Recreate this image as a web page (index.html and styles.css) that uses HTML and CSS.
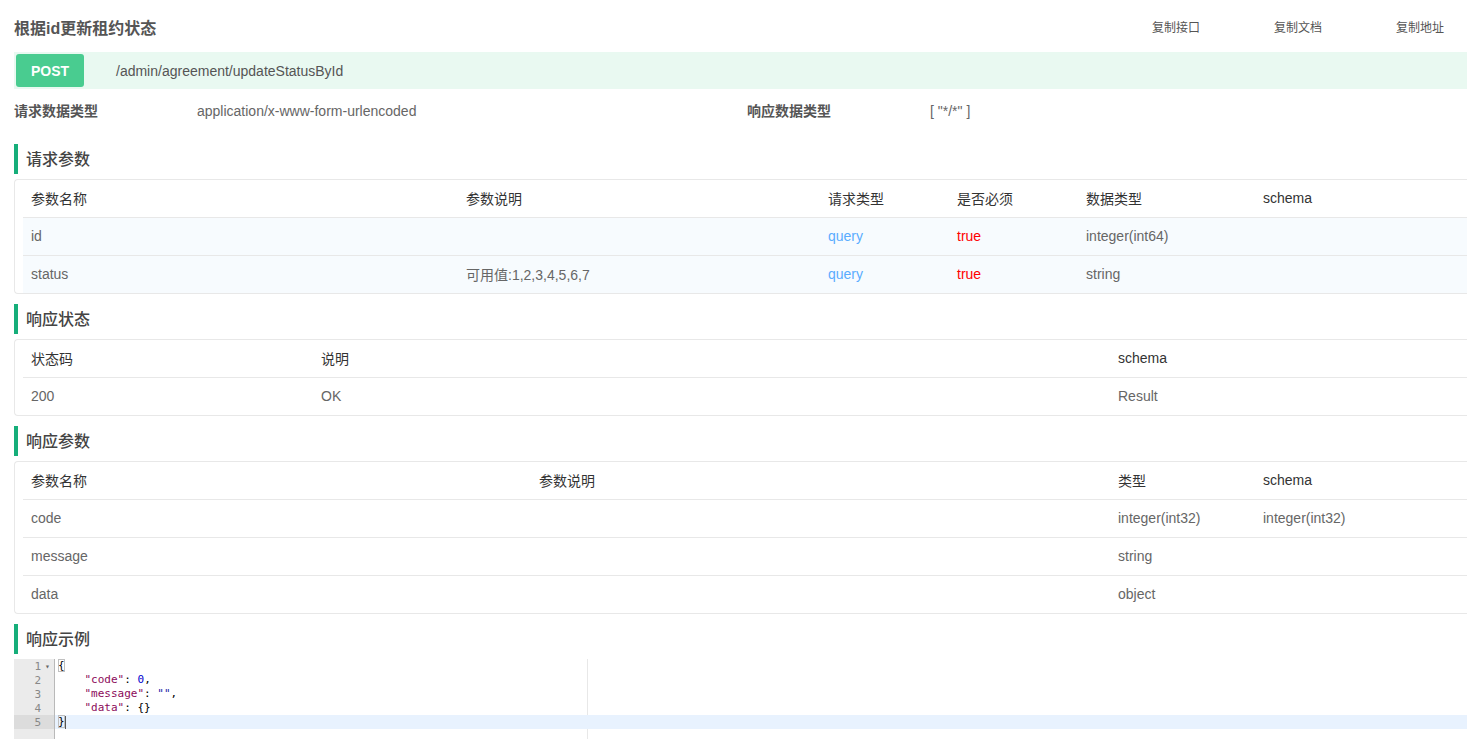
FILE: index.html
```html
<!DOCTYPE html>
<html lang="zh">
<head>
<meta charset="utf-8">
<title>根据id更新租约状态</title>
<link rel="stylesheet" href="styles.css">
</head>
<body>
<div class="page">
  <div class="title-row">
    <div class="title">根据id更新租约状态</div>
    <div class="actions">
      <span class="action">复制接口</span>
      <span class="action">复制文档</span>
      <span class="action">复制地址</span>
    </div>
  </div>

  <div class="api-bar">
    <span class="method">POST</span>
    <span class="path">/admin/agreement/updateStatusById</span>
  </div>

  <div class="info-row">
    <span class="info-label">请求数据类型</span>
    <span class="info-value">application/x-www-form-urlencoded</span>
    <span class="info-label">响应数据类型</span>
    <span class="info-value">[ "*/*" ]</span>
  </div>

  <div class="section-title">请求参数</div>
  <div class="table-box">
    <div class="trow t1 head">
      <div>参数名称</div><div>参数说明</div><div>请求类型</div><div>是否必须</div><div>数据类型</div><div>schema</div>
    </div>
    <div class="trow t1 tint">
      <div>id</div><div></div><div class="query">query</div><div class="req">true</div><div>integer(int64)</div><div></div>
    </div>
    <div class="trow t1 tint">
      <div>status</div><div>可用值:1,2,3,4,5,6,7</div><div class="query">query</div><div class="req">true</div><div>string</div><div></div>
    </div>
  </div>

  <div class="section-title">响应状态</div>
  <div class="table-box">
    <div class="trow t2 head">
      <div>状态码</div><div>说明</div><div>schema</div>
    </div>
    <div class="trow t2">
      <div>200</div><div>OK</div><div>Result</div>
    </div>
  </div>

  <div class="section-title">响应参数</div>
  <div class="table-box">
    <div class="trow t3 head">
      <div>参数名称</div><div>参数说明</div><div>类型</div><div>schema</div>
    </div>
    <div class="trow t3">
      <div>code</div><div></div><div>integer(int32)</div><div>integer(int32)</div>
    </div>
    <div class="trow t3">
      <div>message</div><div></div><div>string</div><div></div>
    </div>
    <div class="trow t3">
      <div>data</div><div></div><div>object</div><div></div>
    </div>
  </div>

  <div class="section-title">响应示例</div>
  <div class="editor">
    <div class="gutter">
      <div class="gl"><span class="num">1</span><span class="fold">▾</span></div>
      <div class="gl"><span class="num">2</span><span class="fold"></span></div>
      <div class="gl"><span class="num">3</span><span class="fold"></span></div>
      <div class="gl"><span class="num">4</span><span class="fold"></span></div>
      <div class="gl active"><span class="num">5</span><span class="fold"></span></div>
    </div>
    <div class="code">
      <div class="print-margin"></div>
      <div class="cl"><span class="box">{</span></div>
      <div class="cl">    <span class="key">"code"</span>: <span class="numv">0</span>,</div>
      <div class="cl">    <span class="key">"message"</span>: <span class="str">""</span>,</div>
      <div class="cl">    <span class="key">"data"</span>: {}</div>
      <div class="cl active"><span class="box">}</span><span class="cursor"></span></div>
    </div>
  </div>
</div>
</body>
</html>
```

FILE: styles.css
```css
html, body {
  margin: 0;
  padding: 0;
  overflow: hidden;
  background: #fff;
}
body {
  font-family: "Liberation Sans", "Noto Sans CJK SC", sans-serif;
  font-size: 14px;
  color: #666;
}
.page {
  width: 1480px;
  padding-left: 14px;
}
.title-row {
  display: flex;
  align-items: center;
  height: 52px;
  padding-top: 1px;
  box-sizing: border-box;
}
.title {
  font-size: 16px;
  font-weight: bold;
  color: #555;
}
.actions {
  margin-left: auto;
  margin-right: 50px;
  display: flex;
  gap: 74px;
}
.action {
  font-size: 12px;
  color: #555;
}
.api-bar {
  height: 37px;
  background: #e9f9f1;
  display: flex;
  align-items: center;
  padding-left: 2px;
}
.method {
  width: 68px;
  height: 33px;
  background: #49cc90;
  color: #fff;
  font-weight: bold;
  font-size: 14px;
  border-radius: 3px;
  display: flex;
  align-items: center;
  justify-content: center;
}
.path {
  margin-left: 32px;
  color: #555;
}
.info-row {
  display: flex;
  align-items: center;
  height: 45px;
  padding-bottom: 3px;
  box-sizing: border-box;
}
.info-label {
  font-weight: bold;
  color: #555;
  width: 183px;
}
.info-value {
  width: 550px;
  color: #666;
  position: relative;
  top: 1px;
}
.section-title {
  margin-top: 10px;
  height: 30px;
  border-left: 4px solid #16ae7a;
  padding-left: 8px;
  padding-bottom: 2px;
  box-sizing: border-box;
  display: flex;
  align-items: center;
  font-size: 16px;
  font-weight: 500;
  color: #444;
}
.table-box {
  margin-top: 5px;
  border: 1px solid #e8e8e8;
  border-right: none;
  border-radius: 4px 0 0 4px;
  padding-left: 8px;
}
.trow {
  display: grid;
  height: 38px;
  align-items: center;
  border-top: 1px solid #e8e8e8;
  box-sizing: border-box;
  padding-bottom: 2px;
}
.trow.head {
  border-top: none;
  height: 37px;
  color: #333;
}
.trow > div { padding-left: 8px; white-space: nowrap; }
.trow.tint { background: #f7fbfe; }
.t1 { grid-template-columns: 435px 362px 129px 129px 177px 1fr; }
.t2 { grid-template-columns: 290px 797px 1fr; }
.t3 { grid-template-columns: 508px 579px 145px 1fr; }
.query { color: #5aacff; }
.req { color: #f00; }

.editor {
  margin-top: 5px;
  display: flex;
  height: 80px;
  font-family: "DejaVu Sans Mono", "Liberation Mono", monospace;
  font-size: 11px;
}
.gutter {
  width: 40px;
  background: #ebebeb;
  border-right: 1px solid #b9b9b9;
  color: #888;
}
.gl {
  height: 14px;
  display: flex;
  align-items: center;
  justify-content: flex-end;
}
.gl.active { background: #dcdcdc; }
.num { font-size: 11px; }
.fold {
  width: 13px;
  font-size: 8px;
  text-align: center;
  color: #666;
}
.code {
  flex: 1;
  position: relative;
}
.print-margin {
  position: absolute;
  left: 532px;
  top: 0;
  bottom: 0;
  width: 1px;
  background: #e8e8e8;
}
.cl {
  height: 14px;
  line-height: 14px;
  padding-left: 3px;
  white-space: pre;
  color: #000;
  position: relative;
}
.cl.active { background: #e8f2fe; }
.key { color: #8c0a5a; }
.numv { color: #0000cd; }
.str { color: #1a1aa6; }
.box { outline: 1px solid #c0c0c0; outline-offset: -1px; }
.cursor {
  display: inline-block;
  width: 1px;
  height: 13px;
  background: #555;
  vertical-align: middle;
}
```
